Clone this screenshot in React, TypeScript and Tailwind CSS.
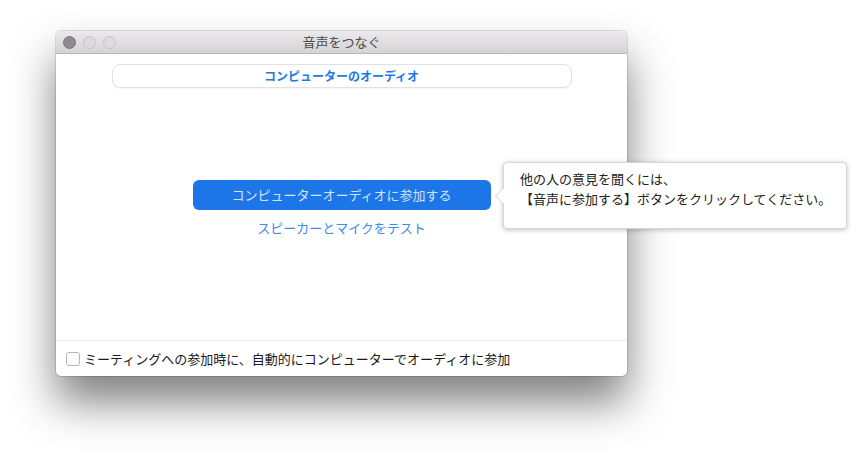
import React from 'react';

const jp = { fontFamily: '"Noto Sans CJK JP", "Noto Sans", sans-serif' };

const TrafficLights = () => (
  <div className="flex items-center gap-[7px] pl-[7px]">
    <span className="w-[13px] h-[13px] rounded-full bg-[#8d8b8e] border border-[#7a787b]" />
    <span className="w-[13px] h-[13px] rounded-full bg-[#dcdadc] border border-[#c4c2c4]" />
    <span className="w-[13px] h-[13px] rounded-full bg-[#dcdadc] border border-[#c4c2c4]" />
  </div>
);

const Tooltip = () => (
  <div className="absolute left-[503px] top-[162px] w-[344px] h-[67px] bg-white rounded-[4px] border border-[#d6d6d6] shadow-[0_1px_5px_rgba(0,0,0,0.25)] pl-[16px] pt-[6px] text-[13px] leading-[20px] text-[#222]">
    <div className="absolute left-[-9px] top-[24px] w-0 h-0 border-y-[9px] border-y-transparent border-r-[9px] border-r-[#d0d0d0]" />
    <div className="absolute left-[-8px] top-[25px] w-0 h-0 border-y-[8px] border-y-transparent border-r-[8px] border-r-white" />
    <p>他の人の意見を聞くには、</p>
    <p>【音声に参加する】ボタンをクリックしてください。</p>
  </div>
);

export default function App() {
  return (
    <div className="relative w-[866px] h-[456px] bg-white overflow-hidden" style={jp}>
      <div className="ml-[56px] mt-[31px] w-[571px] h-[345px] flex flex-col rounded-[5px] bg-white shadow-[0_26px_44px_rgba(0,0,0,0.5),0_0_0_1px_rgba(0,0,0,0.12)] overflow-hidden">
        <div className="relative h-[23px] shrink-0 flex items-center bg-gradient-to-b from-[#ebe9eb] to-[#d5d3d5] border-b border-[#b9b7b9]">
          <TrafficLights />
          <span className="absolute inset-0 flex items-center justify-center text-[13px] text-[#4a4a4a]">音声をつなぐ</span>
        </div>
        <div className="flex-1 flex flex-col items-center">
          <div className="mt-[10px] w-[460px] h-[24px] rounded-[8px] border border-[#e2e2e2] shadow-[0_1px_1px_rgba(0,0,0,0.05)] flex items-center justify-center text-[12px] font-bold text-[#1e78e6]">
            コンピューターのオーディオ
          </div>
          <button className="mt-[92px] w-[298px] h-[30px] rounded-[6px] bg-[#1d76e8] text-[13px] text-[#d3e2fa]">
            コンピューターオーディオに参加する
          </button>
          <a className="mt-[8px] text-[13px] text-[#3d8be8] leading-[20px]">スピーカーとマイクをテスト</a>
        </div>
        <div className="h-[36px] shrink-0 border-t border-[#e4e6f0] flex items-center gap-[4px] pl-[10px] text-[13px] text-[#1a1a1a]">
          <span className="w-[14px] h-[14px] rounded-[3px] border border-[#b5b5b5] bg-white" />
          <span>ミーティングへの参加時に、自動的にコンピューターでオーディオに参加</span>
        </div>
      </div>
      <Tooltip />
    </div>
  );
}
